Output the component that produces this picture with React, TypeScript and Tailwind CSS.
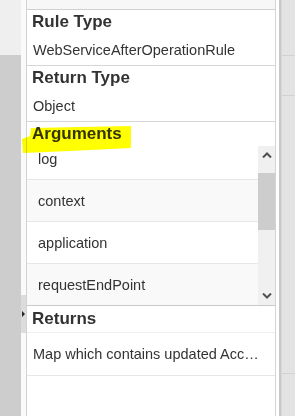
import React from "react";

const rows = [
  { label: "log", bg: "bg-white" },
  { label: "context", bg: "bg-[#f9f9f9]" },
  { label: "application", bg: "bg-white" },
  { label: "requestEndPoint", bg: "bg-[#f9f9f9]" },
];

function Chevron({ up }: { up?: boolean }) {
  return (
    <svg width="10" height="6" viewBox="0 0 10 6">
      <path
        d={up ? "M1 5.5 L5 1.5 L9 5.5" : "M1 0.5 L5 4.5 L9 0.5"}
        fill="none"
        stroke="#505050"
        strokeWidth="2"
      />
    </svg>
  );
}

export default function App() {
  return (
    <div className="relative w-[295px] h-[416px] flex overflow-hidden bg-white font-['Liberation_Sans',Arial,sans-serif] text-[#333333]">
      {/* left strip */}
      <div className="w-[21px] flex flex-col">
        <div className="h-[55px] bg-[#efefef]" />
        <div className="flex-1 bg-[#cdcdcd]" />
      </div>
      {/* gutter */}
      <div className="relative w-[5px] bg-[#fafafa]">
        <div className="absolute left-0 top-[295px] w-[5px] h-[38px] bg-[#dcdcdc] flex items-center">
          <div className="ml-[1px] w-0 h-0 border-y-[3px] border-y-transparent border-l-[3px] border-l-[#222]" />
        </div>
      </div>
      {/* panel */}
      <div className="w-[250px] flex flex-col border-l border-r border-l-[#d2d2d2] border-r-[#d8d2d4]">
        <div className="h-[10px] bg-[#f7f7f7] border-b border-[#d0d0d0]" />
        <div className="h-[56px] border-b border-[#d6d6d6]">
          <div className="h-[24px] flex items-center px-[5px] text-[17px] leading-[20px] font-bold">Rule Type</div>
          <div className="h-[31px] flex items-center pl-[6px] text-[14.5px] leading-[18px]">WebServiceAfterOperationRule</div>
        </div>
        <div className="h-[56px] border-b border-[#d6d6d6]">
          <div className="h-[24px] flex items-center px-[5px] text-[17px] leading-[20px] font-bold">Return Type</div>
          <div className="h-[31px] flex items-center pl-[6px] text-[14.5px] leading-[18px]">Object</div>
        </div>
        <div className="h-[24px] flex items-center px-[5px] text-[17px] leading-[20px] font-bold">Arguments</div>
        <div className="h-[160px] flex border-b border-[#c8c8c8]">
          <div className="flex-1 overflow-hidden">
            <div className="-mt-[8px] flex flex-col">
              {rows.map((r) => (
                <div
                  key={r.label}
                  className={`h-[42px] shrink-0 flex items-center pl-[11px] border-b border-[#e6e6e6] text-[14.5px] leading-[18px] ${r.bg}`}
                >
                  {r.label}
                </div>
              ))}
            </div>
          </div>
          <div className="w-[17px] flex flex-col bg-[#f0f0f0]">
            <div className="h-[18px] flex items-center justify-center">
              <Chevron up />
            </div>
            <div className="flex-1 flex flex-col">
              <div className="h-[9px]" />
              <div className="h-[57px] bg-[#cdcdcd]" />
            </div>
            <div className="h-[18px] flex items-center justify-center">
              <Chevron />
            </div>
          </div>
        </div>
        <div className="h-[27px] flex items-center px-[5px] text-[17px] leading-[20px] font-bold border-b border-[#efefef]">Returns</div>
        <div className="h-[43px] flex items-center pl-[6px] pr-[11px] border-b border-[#e6e6e6] text-[14.5px] leading-[18px]">
          <span className="truncate">Map which contains updated Account attributes</span>
        </div>
        <div className="flex-1" />
      </div>
      {/* right strip */}
      <div className="w-[19px] flex">
        <div className="w-[3px] bg-white" />
        <div className="w-[2px] bg-[#c8c8c8]" />
        <div className="w-[1px] bg-[#d8d8d8]" />
        <div className="flex-1 flex flex-col bg-[#e3e3e3]">
          <div className="h-[56px] border-b border-[#d2d2d2]" />
          <div className="h-[40px] border-b border-[#d2d2d2]" />
          <div className="h-[278px] border-b border-[#d2d2d2]" />
          <div className="flex-1" />
        </div>
      </div>
      {/* yellow highlighter annotation */}
      <svg
        className="absolute left-0 top-0 pointer-events-none mix-blend-multiply"
        width="295"
        height="416"
        viewBox="0 0 295 416"
      >
        <polygon
          points="31,128 131,126 131,148 70,151 23,153 22,139 30,136"
          fill="#ffff00"
        />
      </svg>
    </div>
  );
}
